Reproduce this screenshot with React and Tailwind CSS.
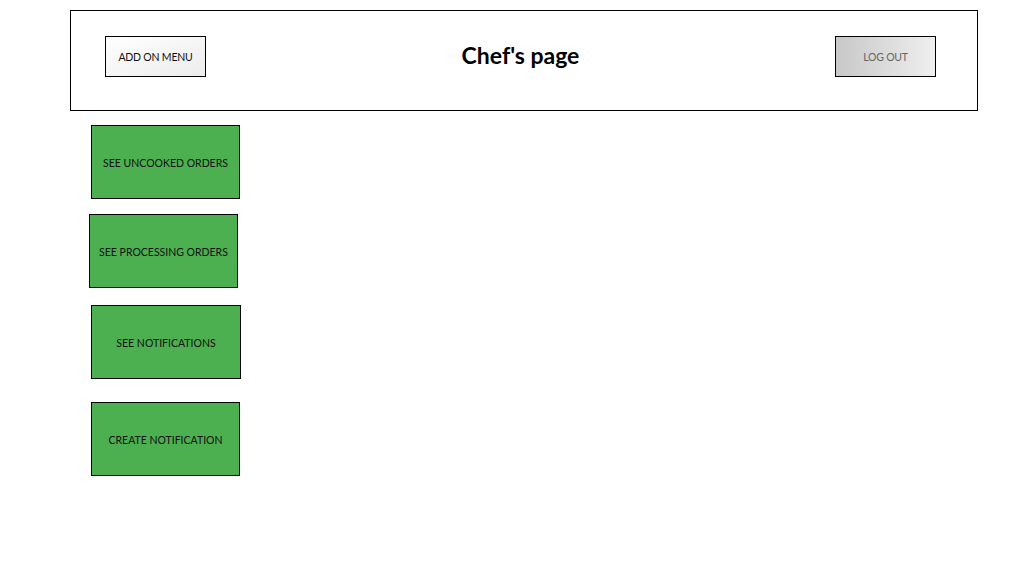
export default function App() {
  const font = { fontFamily: 'Lato, "Noto Sans", sans-serif' }
  return (
    <div className="min-h-[586px] w-[1027px] bg-white text-black" style={font}>
      <div className="pt-[10px] pl-[70px]">
        <div className="flex h-[101px] w-[908px] items-start border border-black pt-[25px] pl-[34px] pr-[41px]">
          <button
            type="button"
            className="h-[41px] w-[101px] border border-black bg-gradient-to-br from-white to-[#ececec] pt-[2px] text-[10.5px] tracking-[-0.2px] text-[#111]"
          >
            ADD ON MENU
          </button>
          <h1 className="flex-1 text-center text-[23px] font-bold leading-[39px]">Chef's page</h1>
          <button
            type="button"
            className="h-[41px] w-[101px] border border-black bg-gradient-to-r from-[#c8c8c8] to-[#efefef] pt-[2px] text-[10.5px] tracking-[-0.2px] text-[#666]"
          >
            LOG OUT
          </button>
        </div>
      </div>

      <div className="flex flex-col items-start text-[10.5px] text-[#111]">
        <button type="button" className="mt-[14px] ml-[91px] h-[74px] w-[149px] border border-black bg-[#4caf50] pt-[4px]">
          SEE UNCOOKED ORDERS
        </button>
        <button type="button" className="mt-[15px] ml-[89px] h-[74px] w-[149px] border border-black bg-[#4caf50] pt-[4px]">
          SEE PROCESSING ORDERS
        </button>
        <button type="button" className="mt-[17px] ml-[91px] h-[74px] w-[150px] border border-black bg-[#4caf50] pt-[4px]">
          SEE NOTIFICATIONS
        </button>
        <button type="button" className="mt-[23px] ml-[91px] h-[74px] w-[149px] border border-black bg-[#4caf50] pt-[4px]">
          CREATE NOTIFICATION
        </button>
      </div>
    </div>
  )
}
